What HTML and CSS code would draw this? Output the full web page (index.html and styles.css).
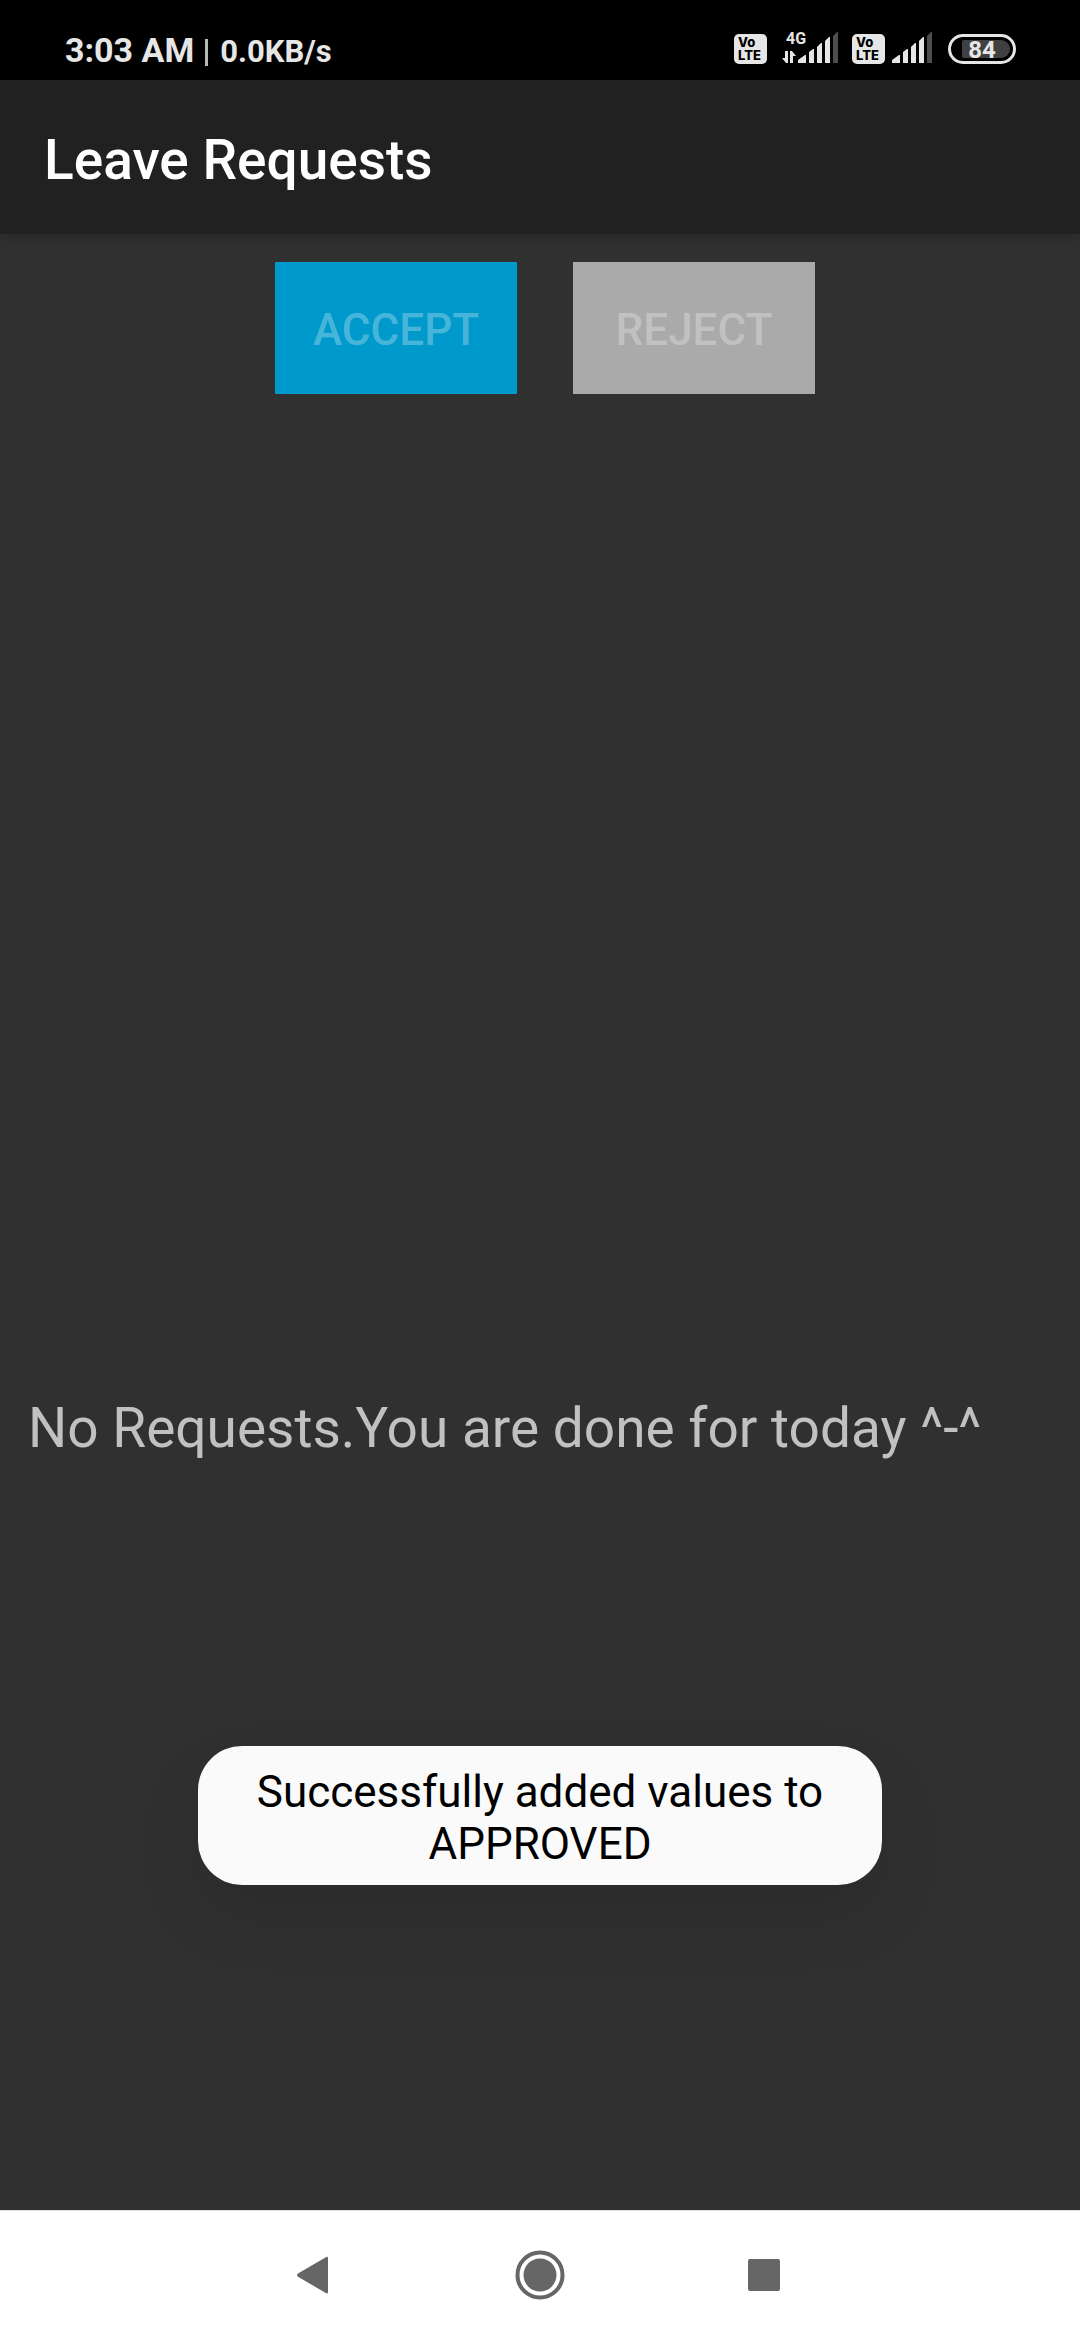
FILE: index.html
```html
<!DOCTYPE html>
<html lang="en">
<head>
<meta charset="utf-8">
<meta name="viewport" content="width=device-width">
<title>Leave Requests</title>
<link rel="stylesheet" href="styles.css">
</head>
<body>
<div class="screen">
  <div class="status-bar">
    <div class="status-left">
      <span class="clock">3:03 AM</span>
      <span class="divider"></span>
      <span class="net-speed">0.0KB/s</span>
    </div>
    <div class="status-right">
      <svg class="volte" width="33" height="30" viewBox="0 0 33 30" aria-hidden="true">
        <rect width="33" height="30" rx="5" fill="#e6e6e6"/>
        <text x="4" y="13" class="volte-text">Vo</text>
        <text x="4" y="26" class="volte-text">LTE</text>
      </svg>
      <svg class="signal-data" width="57" height="40" viewBox="0 -8 57 40" aria-hidden="true">
        <text x="4" y="12" class="network-text">4G</text>
        <g fill="#e6e6e6">
          <path d="M3 19h3v12h-2l-4-5h3zM8 31V19h2l4 5h-3v7z"/>
          <path d="M16 31v-3l7-5h1v8zM27 31V20l4-3h1v14zM35 31V15l4-4h1v20zM43 31V9l4-4h1v26z"/>
        </g>
        <path d="M51 31V4l4-4h1v31z" fill="#4d4d4d"/>
      </svg>
      <svg class="volte" width="33" height="30" viewBox="0 0 33 30" aria-hidden="true">
        <rect width="33" height="30" rx="5" fill="#e6e6e6"/>
        <text x="4" y="13" class="volte-text">Vo</text>
        <text x="4" y="26" class="volte-text">LTE</text>
      </svg>
      <svg class="signal" width="41" height="32" viewBox="0 0 41 32" aria-hidden="true">
        <path d="M0 31v-3l7-5h1v8zM11 31V20l4-3h1v14zM19 31V15l4-4h1v20zM27 31V9l4-4h1v26z" fill="#e6e6e6"/>
        <path d="M35 31V4l4-4h1v31z" fill="#4d4d4d"/>
      </svg>
      <svg class="battery" width="68" height="30" viewBox="0 0 68 30" role="img" aria-label="Battery 84%">
        <rect x="1.5" y="1.5" width="65" height="27" rx="13.5" fill="none" stroke="#e6e6e6" stroke-width="3"/>
        <path d="M16 6h37a9 9 0 0 1 0 18H16a2 2 0 0 1-2-2V8a2 2 0 0 1 2-2z" fill="#404040"/>
        <text x="34" y="24" text-anchor="middle" class="battery-text">84</text>
      </svg>
    </div>
  </div>

  <header class="app-bar">
    <h1 class="app-title">Leave Requests</h1>
  </header>

  <main class="content">
    <div class="actions">
      <button class="action accept" type="button" disabled>ACCEPT</button>
      <button class="action reject" type="button" disabled>REJECT</button>
    </div>
    <div class="empty">
      <p class="empty-text">No Requests.You are done for today ^-^</p>
    </div>
    <div class="toast" role="status">Successfully added values to APPROVED</div>
  </main>

  <nav class="nav-bar">
    <button class="nav-button" type="button" aria-label="Back">
      <svg width="50" height="50" viewBox="0 0 50 50"><path d="M8 23.400 35.800 7.200Q38 6 38 8V42Q38 44.300 35.800 43L8 26.800Q6 25.100 8 23.400z" fill="#666"/></svg>
    </button>
    <button class="nav-button" type="button" aria-label="Home">
      <svg width="50" height="50" viewBox="0 0 50 50"><circle cx="25" cy="25" r="22.500" fill="none" stroke="#666" stroke-width="4"/><circle cx="25" cy="25" r="16.500" fill="#666"/></svg>
    </button>
    <button class="nav-button" type="button" aria-label="Recent apps">
      <svg width="50" height="50" viewBox="0 0 50 50"><rect x="8" y="9" width="32" height="32" rx="2" fill="#666"/></svg>
    </button>
  </nav>
</div>
</body>
</html>
```
FILE: styles.css
```css
* {
  box-sizing: border-box;
}

body {
  margin: 0;
  background: #303030;
  font-family: Roboto, "Liberation Sans", sans-serif;
}

.screen {
  display: flex;
  flex-direction: column;
  min-height: 100vh;
}

/* System status bar */
.status-bar {
  display: flex;
  justify-content: space-between;
  height: 80px;
  padding: 24px 64px 0 65px;
  background: #000;
  color: #e6e6e6;
}

.status-left {
  display: flex;
  align-items: baseline;
  height: 52px;
  line-height: 52px;
  font-weight: 700;
}

.clock {
  font-size: 34px;
}

.divider {
  align-self: center;
  width: 3px;
  height: 27px;
  margin: 4px 12px 0 11px;
  background: #b8b8b8;
}

.net-speed {
  font-size: 31px;
}

.status-right {
  display: flex;
  align-items: flex-end;
  height: 40px;
}

.signal-data {
  margin: 0 13px 0 15px;
}

.signal {
  margin: 0 15px 0 7px;
}

.volte-text {
  font: 800 13px Inter, sans-serif;
  fill: #000;
}

.network-text {
  font: 700 16px Roboto, sans-serif;
  fill: #e6e6e6;
}

.battery-text {
  font: 700 24px Roboto, sans-serif;
  fill: #e6e6e6;
}

/* App bar */
.app-bar {
  display: flex;
  align-items: center;
  height: 154px;
  padding: 5px 44px 0;
  background: #212121;
  box-shadow: 0 2px 10px rgba(0, 0, 0, 0.2);
}

.app-title {
  margin: 0;
  color: #fff;
  font-size: 55px;
  font-weight: 500;
  line-height: 64px;
}

/* Requests */
.content {
  position: relative;
  display: flex;
  flex: 1;
  flex-direction: column;
}

.actions {
  display: flex;
  justify-content: center;
  gap: 56px;
  padding: 28px 0 0 10px;
}

.action {
  width: 242px;
  height: 132px;
  padding: 3px 0 0;
  border: 0;
  color: rgba(255, 255, 255, 0.3);
  font-family: inherit;
  font-size: 44px;
  font-weight: 500;
}

.accept {
  background: #0099cc;
}

.reject {
  background: #aaa;
}

.empty {
  display: flex;
  flex: 1;
  flex-direction: column;
  padding: 2px 28px 0;
}

.empty::before {
  flex: 4;
  content: "";
}

.empty::after {
  flex: 3;
  content: "";
}

.empty-text {
  margin: 0;
  color: #c1c1c1;
  font-size: 55px;
  line-height: 64px;
}

.toast {
  position: absolute;
  bottom: 325px;
  left: 50%;
  width: 684px;
  padding: 20px 56px 15px;
  border-radius: 44px;
  background: #fafafa;
  box-shadow: 0 32px 64px rgba(0, 0, 0, 0.1);
  color: #000;
  font-size: 44px;
  line-height: 52px;
  text-align: center;
  transform: translateX(-50%);
}

/* System navigation */
.nav-bar {
  display: flex;
  justify-content: center;
  gap: 175px;
  height: 130px;
  padding-top: 39px;
  border-top: 1px solid #ddd;
  background: #fff;
}

.nav-button {
  width: 50px;
  height: 50px;
  padding: 0;
  border: 0;
  background: none;
}

.nav-button svg {
  display: block;
}
```
